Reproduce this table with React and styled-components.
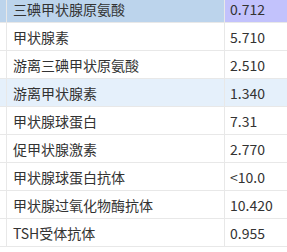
import styled, { createGlobalStyle } from 'styled-components';

const GlobalStyle = createGlobalStyle`
  html, body {
    margin: 0;
    padding: 0;
    background: #ffffff;
    overflow: hidden;
  }
  body {
    font-family: 'Noto Sans CJK SC', 'Noto Sans', sans-serif;
  }
`

const Table = styled.div`
  margin-top: -5px;
  width: 300px;
`

const Row = styled.div`
  display: grid;
  grid-template-columns: 7px 218px 1fr;
  height: 28px;
  background: ${p => p.selected ? '#bcd4ec' : p.hover ? '#e5f0fb' : '#ffffff'};
`

const Cell = styled.div`
  box-sizing: border-box;
  border-right: 1px solid #e8e8e8;
  border-bottom: 1px solid #e8e8e8;
  padding: 2px 0 0 ${p => p.pad || 0}px;
  font-size: 14px;
  line-height: 25px;
  color: #333333;
  white-space: nowrap;
  overflow: hidden;
  background: ${p => p.accent ? '#c2c2fc' : 'transparent'};
`

const rows = [
  ['三碘甲状腺原氨酸', '0.712'],
  ['甲状腺素', '5.710'],
  ['游离三碘甲状原氨酸', '2.510'],
  ['游离甲状腺素', '1.340'],
  ['甲状腺球蛋白', '7.31'],
  ['促甲状腺激素', '2.770'],
  ['甲状腺球蛋白抗体', '<10.0'],
  ['甲状腺过氧化物酶抗体', '10.420'],
  ['TSH受体抗体', '0.955'],
]

const App = () => {
  return (
    <>
      <GlobalStyle />
      <Table>
        {rows.map(([name, value], i) => (
          <Row key={name} selected={i === 0} hover={i === 3}>
            <Cell />
            <Cell pad={6}>{name}</Cell>
            <Cell pad={5} accent={i === 0}>{value}</Cell>
          </Row>
        ))}
      </Table>
    </>
  )
}

export default App;
